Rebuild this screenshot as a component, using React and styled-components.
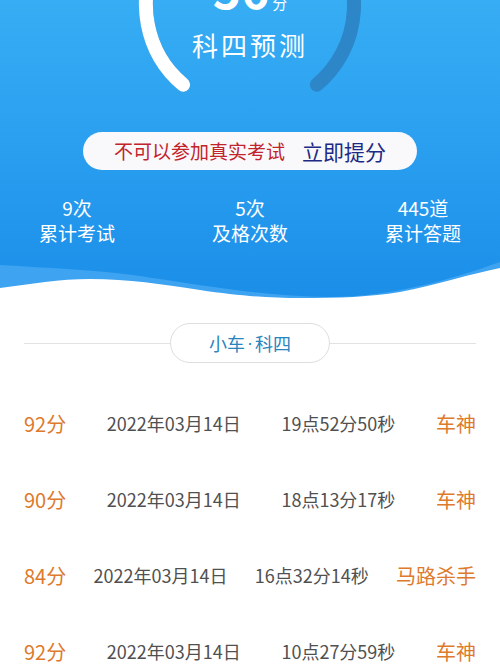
import React from 'react';
import styled, {createGlobalStyle} from 'styled-components';

const GlobalStyle = createGlobalStyle`
	html, body {
		margin: 0;
		padding: 0;
		background: #fff;
	}
	body {
		font-family: "Noto Sans CJK SC", "Noto Sans", sans-serif;
	}
`

const records = [
	{score: 92, date: '2022年03月14日', time: '19点52分50秒', title: '车神'},
	{score: 90, date: '2022年03月14日', time: '18点13分17秒', title: '车神'},
	{score: 84, date: '2022年03月14日', time: '16点32分14秒', title: '马路杀手'},
	{score: 92, date: '2022年03月14日', time: '10点27分59秒', title: '车神'},
];

const stats = [
	{value: '9次', label: '累计考试'},
	{value: '5次', label: '及格次数'},
	{value: '445道', label: '累计答题'},
];

function Gauge() {
	return (
		<GaugeWrap>
			<Ring viewBox="0 0 240 240">
				<path d="M53.1,199.7 A104,104 0 1 1 186.9,199.7" fill="none" stroke="#2d86c7" strokeWidth="14" strokeLinecap="round" />
				<path d="M53.1,199.7 A104,104 0 0 1 150.4,20.6" fill="none" stroke="#fff" strokeWidth="14" strokeLinecap="round" />
			</Ring>
			<Score>56<small>分</small></Score>
			<GaugeLabel>科四预测</GaugeLabel>
		</GaugeWrap>
	)
}

function App() {
	return (
		<Page>
			<GlobalStyle />
			<Header>
				<Gauge />
				<Promo>
					<Warn>不可以参加真实考试</Warn>
					<Boost>立即提分</Boost>
				</Promo>
				<Stats>
					{stats.map(s => (
						<Stat key={s.label}>
							<span>{s.value}</span>
							<span>{s.label}</span>
						</Stat>
					))}
				</Stats>
				<Wave viewBox="0 0 500 45" preserveAspectRatio="none">
					<path d="M0,5 C50,8 100,10 140,16 C200,25 260,36 330,37 C390,37 450,20 500,2 L500,45 L0,45 Z" fill="#3ea3f1" />
					<path d="M0,28 C30,24 60,19 90,19 C130,19 160,24 200,30 C240,36 270,38 300,38 C340,38 370,37 400,32 C440,24 470,14 500,8 L500,45 L0,45 Z" fill="#fff" />
				</Wave>
			</Header>
			<Divider>
				<Tag>小车<Dot>·</Dot>科四</Tag>
			</Divider>
			<List>
				{records.map((r, i) => (
					<Row key={i}>
						<Orange>{r.score}分</Orange>
						<Gray>{r.date}</Gray>
						<Gray>{r.time}</Gray>
						<Orange>{r.title}</Orange>
					</Row>
				))}
			</List>
		</Page>
	)
}

const Page = styled.div`
	width: 500px;
	height: 666px;
	overflow: hidden;
	background: #fff;
`

const Header = styled.header`
	overflow: hidden;
	display: flex;
	flex-direction: column;
	align-items: center;
	background: linear-gradient(180deg, #37adf4 0%, #2ba0f0 45%, #1a8de8 100%);
`

const GaugeWrap = styled.div`
	position: relative;
	width: 240px;
	height: 240px;
	margin-top: -115px;
	margin-bottom: -5px;
	display: flex;
	flex-direction: column;
	align-items: center;
	padding-top: 79px;
	box-sizing: border-box;
	color: #fff;
`

const Ring = styled.svg`
	position: absolute;
	inset: 0;
	width: 240px;
	height: 240px;
`

const Score = styled.div`
	position: relative;
	font-size: 48px;
	line-height: 48px;
	font-weight: 700;

	small{
		font-size: 15px;
		line-height: 1;
		font-weight: 400;
		margin-left: 3px;
	}
`

const GaugeLabel = styled.div`
	position: relative;
	margin-top: 18px;
	font-size: 26px;
	line-height: 30px;
	letter-spacing: 3px;
`

const Promo = styled.div`
	margin-top: 12px;
	width: 334px;
	height: 38px;
	border-radius: 19px;
	background: #f9f9fb;
	display: flex;
	align-items: center;
	justify-content: center;
	gap: 17px;
`

const Warn = styled.span`
	color: #c3232b;
	font-size: 19px;
	line-height: 38px;
`

const Boost = styled.span`
	color: #1d2a86;
	font-size: 21px;
	line-height: 38px;
`

const Stats = styled.div`
	margin-top: 25px;
	width: 100%;
	display: grid;
	grid-template-columns: repeat(3, 173px);
	justify-content: center;
`

const Stat = styled.div`
	display: flex;
	flex-direction: column;
	align-items: center;
	color: #fff;
	font-size: 19px;
	line-height: 25px;
`

const Wave = styled.svg`
	display: block;
	margin-top: 15px;
	width: 500px;
	height: 45px;
`

const Divider = styled.div`
	margin: 18px 24px 0;
	display: flex;
	align-items: center;

	&::before, &::after{
		content: '';
		flex: 1;
		height: 1px;
		background: #e2e2e2;
	}
`

const Tag = styled.div`
	width: 160px;
	height: 40px;
	box-sizing: border-box;
	border: 1px solid #dedede;
	border-radius: 20px;
	display: flex;
	align-items: center;
	justify-content: center;
	color: #2a84bd;
	font-size: 18px;
`

const Dot = styled.span`
	font-family: "Liberation Sans", sans-serif;
	margin: 0 2px;
`

const List = styled.div`
	margin-top: 22px;
`

const Row = styled.div`
	height: 76px;
	padding: 0 24px;
	display: flex;
	align-items: center;
	justify-content: space-between;
`

const Orange = styled.span`
	color: #de7a2c;
	font-size: 20px;
`

const Gray = styled.span`
	color: #505050;
	font-size: 18px;
`

export default App
